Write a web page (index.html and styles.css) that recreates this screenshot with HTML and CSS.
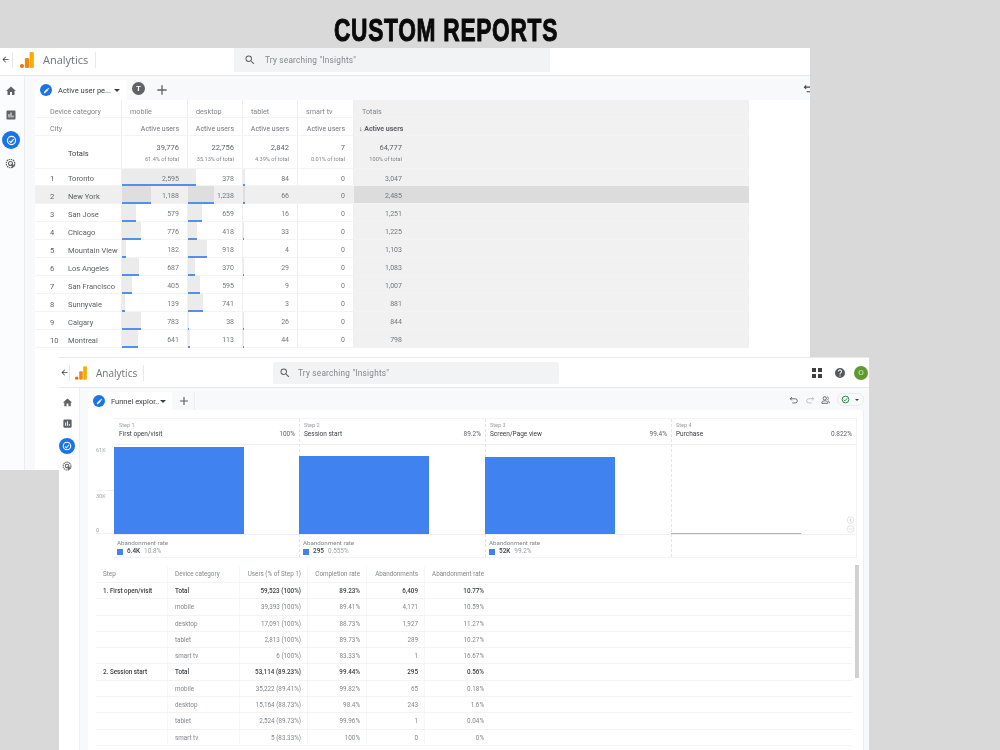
FILE: index.html
```html
<!DOCTYPE html>
<html lang="en">
<head>
<meta charset="utf-8">
<title>Custom Reports</title>
<link rel="stylesheet" href="styles.css">
</head>
<body>
<svg class="defs" width="0" height="0" aria-hidden="true">
  <symbol id="i-home" viewBox="0 0 24 24"><path d="M10 20v-6h4v6h5v-8h3L12 3 2 12h3v8z"/></symbol>
  <symbol id="i-chart" viewBox="0 0 24 24"><path d="M19 3H5c-1.1 0-2 .9-2 2v14c0 1.1.9 2 2 2h14c1.1 0 2-.9 2-2V5c0-1.1-.9-2-2-2zM9 17H7v-7h2v7zm4 0h-2V7h2v10zm4 0h-2v-4h2v4z"/></symbol>
  <symbol id="i-search" viewBox="0 0 24 24"><path d="M15.5 14h-.79l-.28-.27A6.47 6.47 0 0 0 16 9.5 6.5 6.5 0 1 0 9.5 16c1.61 0 3.09-.59 4.23-1.57l.27.28v.79l5 4.99L20.49 19l-4.99-5zm-6 0C7.01 14 5 11.99 5 9.5S7.01 5 9.5 5 14 7.01 14 9.5 11.99 14 9.5 14z"/></symbol>
  <symbol id="i-pen" viewBox="0 0 24 24"><path d="M3 17.25V21h3.75L17.81 9.94l-3.75-3.75L3 17.25zM20.71 7.04a1 1 0 0 0 0-1.41l-2.34-2.34a1 1 0 0 0-1.41 0l-1.83 1.83 3.75 3.75 1.83-1.83z"/></symbol>
  <symbol id="i-back" viewBox="0 0 24 24"><path d="M20 11H7.83l5.59-5.59L12 4l-8 8 8 8 1.41-1.41L7.83 13H20v-2z"/></symbol>
  <symbol id="i-plus" viewBox="0 0 24 24"><path d="M19 13h-6v6h-2v-6H5v-2h6V5h2v6h6v2z"/></symbol>
  <symbol id="i-explore" viewBox="0 0 24 24"><circle cx="12" cy="12" r="7.5" fill="none" stroke="#fff" stroke-width="2.2"/><path d="M8 13l3 2.5 5-6" fill="none" stroke="#fff" stroke-width="2.2"/></symbol>
  <symbol id="i-ads" viewBox="0 0 24 24"><circle cx="11" cy="11" r="8.5" fill="none" stroke="currentColor" stroke-width="2.4" stroke-dasharray="3 1.4"/><circle cx="11" cy="11" r="4" fill="none" stroke="currentColor" stroke-width="2.2"/><path d="M11 11l10 4-4 2-2 4z" fill="currentColor"/></symbol>
  <symbol id="i-logo" viewBox="0 0 14 16"><rect x="9.6" y="0" width="4.2" height="16" rx="1.2" fill="#f9ab00"/><rect x="4.9" y="6" width="4.2" height="10" rx="1.2" fill="#ee8a12"/><circle cx="2" cy="14" r="2" fill="#e8710a"/></symbol>
  <symbol id="i-help" viewBox="0 0 24 24"><path d="M12 2a10 10 0 1 0 0 20 10 10 0 0 0 0-20zm1 17h-2v-2h2v2zm2.07-7.75l-.9.92C13.45 12.9 13 13.5 13 15h-2v-.5c0-1.1.45-2.1 1.17-2.83l1.24-1.26A2 2 0 1 0 10 9H8a4 4 0 1 1 7.07 2.25z"/></symbol>
  <symbol id="i-undo" viewBox="0 0 24 24"><path d="M7 5L3 9l4 4M3.5 9H15a5 5 0 0 1 0 10H8" fill="none" stroke="currentColor" stroke-width="2.2"/></symbol>
  <symbol id="i-redo" viewBox="0 0 24 24"><path d="M17 5l4 4-4 4M20.5 9H9a5 5 0 0 0 0 10h7" fill="none" stroke="currentColor" stroke-width="2"/></symbol>
  <symbol id="i-share" viewBox="0 0 24 24"><circle cx="9" cy="8" r="4" fill="none" stroke="currentColor" stroke-width="2.2"/><path d="M2 20v-2c0-3 4-4 7-4s7 1 7 4v2z" fill="none" stroke="currentColor" stroke-width="2.2"/><path d="M15 4.200a4 4 0 0 1 0 7.600M17 14c2 .5 3 2 3 4v2" fill="none" stroke="currentColor" stroke-width="2"/></symbol>
  <symbol id="i-check" viewBox="0 0 24 24"><circle cx="12" cy="12" r="9" fill="none" stroke="#188038" stroke-width="2.400"/><path d="M7.500 12.500l3 3 6-6.500" fill="none" stroke="#188038" stroke-width="2.400"/></symbol>
  <symbol id="i-zin" viewBox="0 0 24 24"><circle cx="12" cy="12" r="10" fill="none" stroke="currentColor" stroke-width="1.600"/><path d="M6 12h12M12 6v12" stroke="currentColor" stroke-width="1.600"/></symbol>
  <symbol id="i-zout" viewBox="0 0 24 24"><circle cx="12" cy="12" r="10" fill="none" stroke="currentColor" stroke-width="1.600"/><path d="M6 12h12" stroke="currentColor" stroke-width="1.600"/></symbol>
</svg>

<h1 class="page-title">CUSTOM REPORTS</h1>

<section class="window window-back">
  <header class="topbar">
    <svg class="ic back"><use href="#i-back"/></svg>
    <span class="vsep"></span>
    <svg class="logo"><use href="#i-logo"/></svg>
    <span class="brand">Analytics</span>
    <span class="vsep brand-sep"></span>
    <div class="search">
      <svg class="ic search-ic"><use href="#i-search"/></svg>
      <span>Try searching "Insights"</span>
    </div>
  </header>
  <div class="body">
    <nav class="rail">
      <svg class="ic rail-ic"><use href="#i-home"/></svg>
      <svg class="ic rail-ic"><use href="#i-chart"/></svg>
      <span class="explore"><svg class="ic"><use href="#i-explore"/></svg></span>
      <svg class="ic rail-ic"><use href="#i-ads"/></svg>
    </nav>
    <main class="main">
      <div class="tabs">
        <div class="tab tab-report">
          <span class="pen"><svg class="ic"><use href="#i-pen"/></svg></span>
          <span class="tab-name">Active user pe...</span>
          <span class="caret"></span>
        </div>
        <span class="seg-t">T</span>
        <div class="tab-plus"><svg class="ic"><use href="#i-plus"/></svg></div>
        <svg class="ic clipped-undo"><use href="#i-undo"/></svg>
      </div>
      <div class="report">
        <div class="r-row r-head">
          <div class="lab">Device category</div><div class="h">mobile</div><div class="h">desktop</div><div class="h">tablet</div><div class="h">smart tv</div><div class="h t">Totals</div>
        </div>
        <div class="r-row r-head">
          <div class="lab">City</div><div class="n">Active users</div><div class="n">Active users</div><div class="n">Active users</div><div class="n">Active users</div><div class="n t strong">↓ Active users</div>
        </div>
        <div class="r-row r-totals">
          <div class="tot-lab">Totals</div>
          <div class="n"><b>39,776</b><small>61.4% of total</small></div>
          <div class="n"><b>22,756</b><small>35.13% of total</small></div>
          <div class="n"><b>2,842</b><small>4.39% of total</small></div>
          <div class="n"><b>7</b><small>0.01% of total</small></div>
          <div class="n t"><b>64,777</b><small>100% of total</small></div>
        </div>
        <div class="r-row first"><div class="city"><i>1</i>Toronto</div><div class="n"><span class="bar" style="width:73px"></span><em>2,595</em></div><div class="n"><span class="bar" style="width:8px"></span><em>378</em></div><div class="n"><span class="bar" style="width:2px"></span><em>84</em></div><div class="n"><em>0</em></div><div class="n t"><em>3,047</em></div></div>
        <div class="r-row hot"><div class="city"><i>2</i>New York</div><div class="n"><span class="bar" style="width:29px"></span><em>1,188</em></div><div class="n"><span class="bar" style="width:26px"></span><em>1,238</em></div><div class="n"><span class="bar" style="width:2px"></span><em>66</em></div><div class="n"><em>0</em></div><div class="n t"><em>2,485</em></div></div>
        <div class="r-row"><div class="city"><i>3</i>San Jose</div><div class="n"><span class="bar" style="width:14px"></span><em>579</em></div><div class="n"><span class="bar" style="width:14px"></span><em>659</em></div><div class="n"><em>16</em></div><div class="n"><em>0</em></div><div class="n t"><em>1,251</em></div></div>
        <div class="r-row"><div class="city"><i>4</i>Chicago</div><div class="n"><span class="bar" style="width:19px"></span><em>776</em></div><div class="n"><span class="bar" style="width:9px"></span><em>418</em></div><div class="n"><span class="bar" style="width:1px"></span><em>33</em></div><div class="n"><em>0</em></div><div class="n t"><em>1,225</em></div></div>
        <div class="r-row"><div class="city"><i>5</i>Mountain View</div><div class="n"><span class="bar" style="width:4px"></span><em>182</em></div><div class="n"><span class="bar" style="width:19px"></span><em>918</em></div><div class="n"><em>4</em></div><div class="n"><em>0</em></div><div class="n t"><em>1,103</em></div></div>
        <div class="r-row"><div class="city"><i>6</i>Los Angeles</div><div class="n"><span class="bar" style="width:17px"></span><em>687</em></div><div class="n"><span class="bar" style="width:7px"></span><em>370</em></div><div class="n"><span class="bar" style="width:1px"></span><em>29</em></div><div class="n"><em>0</em></div><div class="n t"><em>1,083</em></div></div>
        <div class="r-row"><div class="city"><i>7</i>San Francisco</div><div class="n"><span class="bar" style="width:10px"></span><em>405</em></div><div class="n"><span class="bar" style="width:12px"></span><em>595</em></div><div class="n"><em>9</em></div><div class="n"><em>0</em></div><div class="n t"><em>1,007</em></div></div>
        <div class="r-row"><div class="city"><i>8</i>Sunnyvale</div><div class="n"><span class="bar" style="width:3px"></span><em>139</em></div><div class="n"><span class="bar" style="width:15px"></span><em>741</em></div><div class="n"><em>3</em></div><div class="n"><em>0</em></div><div class="n t"><em>881</em></div></div>
        <div class="r-row"><div class="city"><i>9</i>Calgary</div><div class="n"><span class="bar" style="width:19px"></span><em>783</em></div><div class="n"><span class="bar" style="width:1px"></span><em>38</em></div><div class="n"><span class="bar" style="width:1px"></span><em>26</em></div><div class="n"><em>0</em></div><div class="n t"><em>844</em></div></div>
        <div class="r-row"><div class="city"><i>10</i>Montreal</div><div class="n"><span class="bar" style="width:16px"></span><em>641</em></div><div class="n"><span class="bar" style="width:2px"></span><em>113</em></div><div class="n"><span class="bar" style="width:1px"></span><em>44</em></div><div class="n"><em>0</em></div><div class="n t"><em>798</em></div></div>
      </div>
    </main>
  </div>
</section>

<section class="window window-front">
  <header class="topbar">
    <svg class="ic back"><use href="#i-back"/></svg>
    <span class="vsep"></span>
    <svg class="logo"><use href="#i-logo"/></svg>
    <span class="brand">Analytics</span>
    <span class="vsep brand-sep"></span>
    <div class="search">
      <svg class="ic search-ic"><use href="#i-search"/></svg>
      <span>Try searching "Insights"</span>
    </div>
    <div class="top-actions">
      <span class="apps"><i></i><i></i><i></i><i></i></span>
      <svg class="ic help"><use href="#i-help"/></svg>
      <span class="avatar">O</span>
    </div>
  </header>
  <div class="body">
    <nav class="rail">
      <svg class="ic rail-ic"><use href="#i-home"/></svg>
      <svg class="ic rail-ic"><use href="#i-chart"/></svg>
      <span class="explore"><svg class="ic"><use href="#i-explore"/></svg></span>
      <svg class="ic rail-ic"><use href="#i-ads"/></svg>
    </nav>
    <main class="main">
      <div class="tabs">
        <div class="tab tab-report">
          <span class="pen"><svg class="ic"><use href="#i-pen"/></svg></span>
          <span class="tab-name">Funnel explor..</span>
          <span class="caret"></span>
        </div>
        <div class="tab-plus"><svg class="ic"><use href="#i-plus"/></svg></div>
        <div class="tools">
          <svg class="ic tool"><use href="#i-undo"/></svg>
          <svg class="ic tool faint"><use href="#i-redo"/></svg>
          <svg class="ic tool"><use href="#i-share"/></svg>
          <span class="status"><svg class="ic"><use href="#i-check"/></svg><span class="caret"></span></span>
        </div>
      </div>
      <div class="canvas">
        <div class="funnel-wrap">
          <div class="axis"><span>61K</span><span class="tick">30K</span><span class="zero">0</span></div>
          <div class="funnel">
            <div class="step">
              <div class="step-head"><small>Step 1</small><div class="step-title"><span>First open/visit</span><span>100%</span></div></div>
              <div class="plot"><span class="fbar fbar-1"></span></div>
              <div class="step-foot"><small>Abandonment rate</small><div class="legend"><i></i><b>6.4K</b><span>10.8%</span></div></div>
            </div>
            <div class="step">
              <div class="step-head"><small>Step 2</small><div class="step-title"><span>Session start</span><span>89.2%</span></div></div>
              <div class="plot"><span class="fbar fbar-2"></span></div>
              <div class="step-foot"><small>Abandonment rate</small><div class="legend"><i></i><b>295</b><span>0.555%</span></div></div>
            </div>
            <div class="step">
              <div class="step-head"><small>Step 3</small><div class="step-title"><span>Screen/Page view</span><span>99.4%</span></div></div>
              <div class="plot"><span class="fbar fbar-3"></span></div>
              <div class="step-foot"><small>Abandonment rate</small><div class="legend"><i></i><b>52K</b><span>99.2%</span></div></div>
            </div>
            <div class="step">
              <div class="step-head"><small>Step 4</small><div class="step-title"><span>Purchase</span><span>0.822%</span></div></div>
              <div class="plot"><span class="fbar fbar-4"></span>
                <div class="zoomers"><svg class="ic"><use href="#i-zin"/></svg><svg class="ic"><use href="#i-zout"/></svg></div>
              </div>
              <div class="step-foot"></div>
            </div>
          </div>
        </div>
        <div class="f-table">
          <div class="f-row f-head"><div>Step</div><div>Device category</div><div class="num">Users (% of Step 1)</div><div class="num">Completion rate</div><div class="num">Abandonments</div><div class="num">Abandonment rate</div></div>
          <div class="f-row f-total"><div>1. First open/visit</div><div>Total</div><div class="num">59,523 (100%)</div><div class="num">89.23%</div><div class="num">6,409</div><div class="num">10.77%</div></div>
          <div class="f-row"><div></div><div>mobile</div><div class="num">39,393 (100%)</div><div class="num">89.41%</div><div class="num">4,171</div><div class="num">10.59%</div></div>
          <div class="f-row"><div></div><div>desktop</div><div class="num">17,091 (100%)</div><div class="num">88.73%</div><div class="num">1,927</div><div class="num">11.27%</div></div>
          <div class="f-row"><div></div><div>tablet</div><div class="num">2,813 (100%)</div><div class="num">89.73%</div><div class="num">289</div><div class="num">10.27%</div></div>
          <div class="f-row"><div></div><div>smart tv</div><div class="num">6 (100%)</div><div class="num">83.33%</div><div class="num">1</div><div class="num">16.67%</div></div>
          <div class="f-row f-total"><div>2. Session start</div><div>Total</div><div class="num">53,114 (89.23%)</div><div class="num">99.44%</div><div class="num">295</div><div class="num">0.56%</div></div>
          <div class="f-row"><div></div><div>mobile</div><div class="num">35,222 (89.41%)</div><div class="num">99.82%</div><div class="num">65</div><div class="num">0.18%</div></div>
          <div class="f-row"><div></div><div>desktop</div><div class="num">15,164 (88.73%)</div><div class="num">98.4%</div><div class="num">243</div><div class="num">1.6%</div></div>
          <div class="f-row"><div></div><div>tablet</div><div class="num">2,524 (89.73%)</div><div class="num">99.96%</div><div class="num">1</div><div class="num">0.04%</div></div>
          <div class="f-row"><div></div><div>smart tv</div><div class="num">5 (83.33%)</div><div class="num">100%</div><div class="num">0</div><div class="num">0%</div></div>
        </div>
        <span class="scroll-thumb"></span>
      </div>
    </main>
  </div>
</section>
</body>
</html>
```
FILE: styles.css
```css
* { box-sizing: border-box; }
html, body { margin: 0; height: 750px; overflow: hidden; }
body {
  position: relative;
  background: #d9d9d9;
  font-family: Roboto, "Liberation Sans", sans-serif;
  color: #5f6368;
}
.defs { position: absolute; }
.page-title {
  margin: 0;
  padding-top: 14px;
  width: 892px;
  text-align: center;
  font: 900 32px/32px "Liberation Sans", sans-serif;
  color: #0a0a0a;
  letter-spacing: 1px;
  -webkit-text-stroke: 1px #0a0a0a;
  transform: scaleX(.71);
}
.window {
  position: absolute;
  width: 810px;
  background: #fff;
  overflow: hidden;
  display: flex;
  flex-direction: column;
  filter: blur(.35px);
}
.window-back { left: 0; top: 48px; height: 422px; }
.window-front { left: 59px; top: 357px; height: 393px; border-top: 1px solid #e8eaed; }
.ic { display: block; width: 100%; height: 100%; fill: currentColor; }

.topbar { display: flex; align-items: center; flex: none; border-bottom: 1px solid #e6e8ea; position: relative; }
.window-back .topbar { height: 28px; padding-bottom: 4px; }
.window-front .topbar { height: 30px; }
.back { width: 9px; height: 9px; margin-left: 1px; color: #3c4043; flex: none; }
.vsep { width: 1px; height: 16px; background: #e8e8e8; margin-left: 2px; flex: none; }
.logo { width: 14px; height: 16px; margin-left: 7px; flex: none; }
.brand { font: 400 11px/16px "Open Sans", Roboto, sans-serif; color: #6f7377; margin-left: 9px; width: 45px; flex: none; }
.brand-sep { margin-left: 7px; }
.search {
  display: flex; align-items: center; height: 24px; width: 316px; flex: none;
  margin-left: 138px; background: #f1f3f4; border-radius: 2px;
  font-size: 8.200px; letter-spacing: .25px; color: #80868b;
  align-self: flex-start;
}
.search-ic { width: 12px; height: 12px; margin: 0 9px 0 10px; color: #5f6368; flex: none; }
.window-front .vsep { margin-left: 0; }
.window-front .logo { width: 12px; height: 14px; margin-left: 5px; }
.window-front .brand { font-size: 10px; margin-left: 9px; width: 40px; }
.window-front .brand-sep { margin-left: 7px; }
.window-front .search { width: 286px; height: 22px; margin: 4px 0 0 129px; }
.window-front .search-ic { margin: 0 7px 0 6px; }
.top-actions { display: flex; align-items: center; margin-left: auto; }
.apps { display: grid; grid-template-columns: 4px 4px; gap: 2px; margin-right: 12px; }
.apps i { width: 4px; height: 4px; background: #3c4043; }
.help { width: 12px; height: 12px; color: #54585c; margin-right: 8px; }
.avatar { width: 14px; height: 14px; border-radius: 50%; background: #5f9a2e; color: #d8ecc8; font-size: 8px; line-height: 14px; text-align: center; margin-right: 1px; }

.body { display: flex; flex: 1; min-height: 0; }
.rail { width: 25px; flex: none; border-right: 1px solid #eceef0; display: flex; flex-direction: column; align-items: center; padding: 9px 2px 0 0; color: #5f6368; background: #fbfcfd; }
.rail-ic { width: 12px; height: 12px; flex: none; margin-bottom: 12px; }
.explore { width: 18px; height: 18px; border-radius: 50%; background: #1a73e8; padding: 2.500px; margin: -2px 0 9px; flex: none; }
.window-front .rail { width: 21px; padding: 9px 4px 0 0; background: #fff; }
.window-front .rail-ic { width: 11px; height: 11px; margin-bottom: 10px; }
.window-front .explore { width: 16px; height: 16px; padding: 2px; margin: -1px 0 7px; }

.main { flex: 1; min-width: 0; background: #f8f9fa; display: flex; flex-direction: column; }
.tabs { display: flex; align-items: center; height: 24px; flex: none; padding: 1px 0 0 10px; position: relative; }
.window-front .tabs { height: 22px; padding-left: 8px; }
.tab { display: flex; align-items: center; height: 20px; width: 92px; background: #fff; align-self: flex-end; padding-left: 5px; }
.window-front .tab { width: 84px; height: 18px; padding-left: 5px; }
.pen { width: 12px; height: 12px; border-radius: 50%; background: #1a73e8; color: #fff; padding: 2.500px; flex: none; }
.tab-name { font-size: 7.500px; color: #3c4043; margin-left: 6px; white-space: nowrap; }
.caret { width: 0; height: 0; border: 3px solid transparent; border-top-color: #3c4043; border-bottom-width: 0; margin-left: auto; margin-right: 7px; flex: none; }
.window-front .tab .caret { margin-right: 6px; }
.seg-t { width: 13px; height: 13px; border-radius: 50%; background: #5f6368; color: #fff; font-size: 8px; font-weight: 700; line-height: 13px; text-align: center; margin: 0 5px 0 5px; flex: none; }
.tab-plus { width: 24px; height: 20px; padding: 2px 3px; color: #5f6368; align-self: flex-end; flex: none; }
.window-front .tab-plus { width: 21px; height: 18px; background: #f8f9fa; border-right: 1px solid #eceef0; margin-left: 2px; padding: 2px 3px; }
.clipped-undo { position: absolute; right: -4px; top: 7px; width: 11px; height: 11px; color: #444; }
.tools { margin-left: auto; display: flex; align-items: center; padding-right: 5px; color: #5f6368; }
.tool { width: 10px; height: 10px; margin-right: 6px; flex: none; }
.faint { opacity: .45; }
.status { display: flex; align-items: center; width: 27px; height: 13px; border: 1px solid #e8eaed; border-radius: 7px; padding-left: 3px; }
.status .ic { width: 9px; height: 9px; flex: none; }
.status .caret { border-width: 2px; border-bottom-width: 0; margin-right: 4px; }

/* back window report */
.report { background: #fff; padding-left: 10px; margin-left: 0; flex: 1; font-size: 7px; position: relative; }
.report::before { content: ""; position: absolute; left: 0; top: 0; bottom: 0; width: 10px; background: #f8f9fa; }
.r-row {
  display: grid;
  grid-template-columns: 87px 66px 55px 55px 56px 395px;
  grid-template-rows: minmax(0, 1fr);
  width: 714px;
  height: 18px;
  border-bottom: 1px solid #f3f3f3;
  line-height: 21px;
}
.r-row.first { height: 17px; line-height: 20px; }
.r-head { height: 18px; line-height: 22px; }
.r-head:first-child { line-height: 24px; }
.r-row > div { border-right: 1px solid #efefef; position: relative; white-space: nowrap; }
.r-row > .t { background: #f1f1f1; border-right: 0; }
.lab { padding-left: 15px; color: #80868b; font-size: 7.200px; }
.h { padding-left: 8px; color: #80868b; font-size: 7.200px; }
.n { text-align: right; padding-right: 8px; color: #73777b; }
.n.t { text-align: left; padding-left: 8px; padding-right: 0; }
.r-row .n.t em, .r-row .n.t b, .r-row .n.t small { display: block; width: 40px; text-align: right; }
.r-row > .strong { font-weight: 700; color: #5f6368; font-size: 7px; padding-left: 5px; }
.r-totals { height: 33px; }
.r-totals .tot-lab { padding-left: 33px; line-height: 36px; font-size: 7.500px; color: #3c4043; }
.r-totals .n b { display: block; font-weight: 400; font-size: 7.500px; line-height: 10px; margin-top: 7px; color: #5f6368; }
.r-totals .n small { display: block; font-size: 5.600px; line-height: 12px; color: #80868b; }
.city { padding-left: 15px; color: #5a5e63; font-size: 7.500px; }
.city i { display: inline-block; width: 18px; font-style: normal; }
.n em { font-style: normal; position: relative; z-index: 2; }
.bar { position: absolute; left: 0; top: 0; bottom: -1px; background: #ebebeb; border-bottom: 2px solid #5590e6; z-index: 1; }
.r-row > .n:nth-child(2) { z-index: 2; }
.hot > div { background: #efefef; }
.hot > .t { background: #dcdcdc; }
.hot .bar { background: #dedede; }

/* front window */
.canvas { background: #fff; margin-left: 8px; margin-right: 5px; flex: 1; position: relative; padding-top: 8px; min-height: 0; border-right: 1px solid #eeeff0; }
.funnel-wrap { display: flex; padding-left: 8px; }
.axis { width: 18px; flex: none; margin-top: 26px; height: 90px; font-size: 5.500px; line-height: 6px; color: #a0a5aa; padding-top: 3px; border-bottom: 1px solid #f0f0f0; }
.axis span { display: block; }
.axis .tick { margin-top: 37px; padding-top: 2px; border-top: 1px solid #f2f2f2; }
.axis .zero { margin-top: 28px; }
.funnel { display: grid; grid-template-columns: 185px 186px 186px 185px; border: 1px solid #f3f3f3; border-width: 1px 1px 1px 0; height: 140px; }
.step { display: flex; flex-direction: column; min-width: 0; }
.step + .step { border-left: 1px dashed #e4e4e4; }
.step + .step .fbar { margin-left: -1px; }
.step-head { height: 26px; border-bottom: 1px solid #f0f0f0; padding: 2px 4px 0 5px; flex: none; }
.step + .step .step-head { padding-left: 4px; }
.step-head small { display: block; font-size: 5.500px; line-height: 8px; color: #9aa0a6; }
.step-title { display: flex; justify-content: space-between; font-size: 6.500px; line-height: 10px; color: #3c4043; }
.step-title span:last-child { color: #5f6368; }
.plot { height: 90px; border-bottom: 1px solid #f0f0f0; position: relative; display: flex; align-items: flex-end; flex: none; }
.fbar { display: block; width: 130px; background: #4082ef; }
.fbar-1 { height: 87px; }
.fbar-2 { height: 78px; }
.fbar-3 { height: 77px; }
.fbar-4 { height: 1px; background: #8fb5f2; }
.zoomers { position: absolute; right: 1px; bottom: 1px; width: 9px; color: #c8cbce; display: grid; gap: 1px; }
.zoomers .ic { height: 8px; }
.step-foot { padding: 4px 0 0 3px; flex: 1; }
.step-foot small { display: block; font-size: 6.200px; line-height: 8px; color: #80868b; }
.legend { display: flex; align-items: center; font-size: 6.400px; line-height: 9px; margin-top: 0; color: #9aa0a6; }
.legend i { width: 6px; height: 6px; background: #4082ef; margin-right: 4px; }
.legend b { color: #3c4043; margin-right: 4px; font-weight: 500; }

.f-table { margin: 8px 0 0 8px; width: 756px; font-size: 6.300px; color: #80868b; }
.f-row {
  display: grid;
  grid-template-columns: 72px 72px 68px 59px 58px 65px;
  grid-template-rows: minmax(0, 1fr);
  height: 16.300px;
  line-height: 16px;
  border-bottom: 1px solid #f3f3f3;
}
.f-row > div { padding-left: 7px; white-space: nowrap; border-right: 1px solid #f7f7f7; }
.f-row > div:last-child { border-right: 0; }
.f-row > .num { text-align: right; padding: 0 6px 0 0; }
.f-total { color: #3c4043; font-weight: 500; }
.f-head { height: 17px; }
.scroll-thumb { position: absolute; right: 4px; top: 155px; width: 4px; height: 113px; background: #cfd0d1; }
```
